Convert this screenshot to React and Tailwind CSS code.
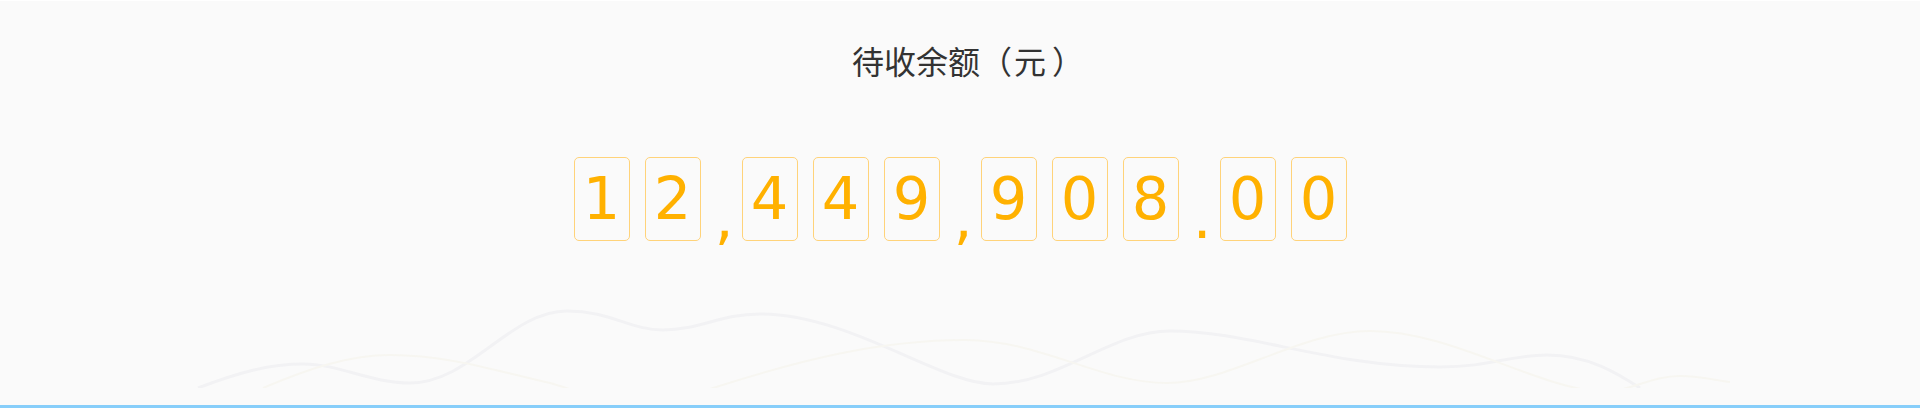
const digits = ['1', '2', ',', '4', '4', '9', ',', '9', '0', '8', '.', '0', '0'];

function Waves() {
  return (
    <svg className="block w-full h-[98px]" viewBox="0 290 1920 98" preserveAspectRatio="none" fill="none">
      <path
        d="M198,388 C240,372 270,364 303,364 C340,364 370,383 410,383 C470,383 510,311 567,311 C610,311 630,330 663,330 C700,330 720,314 760,314 C850,314 940,384 993,384 C1060,384 1110,331 1170,331 C1250,331 1330,367 1440,367 C1490,367 1510,355 1547,355 C1590,355 1620,375 1640,388"
        stroke="#f2f2f4"
        strokeWidth="3"
      />
      <path
        d="M263,388 C310,368 350,355 390,355 C450,355 500,372 550,383 C575,390 590,398 620,400 C660,402 690,396 713,388 C800,360 880,340 965,340 C1040,340 1100,383 1167,383 C1230,383 1300,331 1370,331 C1450,331 1530,385 1600,392 C1630,392 1650,376 1680,376 C1700,376 1715,380 1730,382"
        stroke="#f7f6f1"
        strokeWidth="2"
      />
    </svg>
  );
}

export default function App() {
  return (
    <div className="w-full h-[408px] bg-[#fafafa] border-t border-white flex flex-col overflow-hidden">
      <h1
        className="pt-[37px] pl-[16px] h-[83px] text-center text-[32px] leading-[44px] text-[#333333] font-normal"
        style={{ fontFamily: '"Noto Sans CJK SC", "Noto Sans", sans-serif' }}
      >
        待收余额
        <span className="mr-[2px]">（</span>
        元
        <span className="ml-[6px]">）</span>
      </h1>

      <div
        className="mt-[73px] flex justify-center gap-[15px]"
        style={{ fontFamily: '"DejaVu Sans", sans-serif' }}
      >
        {digits.map((d, i) =>
          /\d/.test(d) ? (
            <div
              key={i}
              className="w-[56px] h-[84px] border border-[#ffd37a] rounded-[5px] flex items-center justify-center text-[59px] leading-[84px] text-[#ffb100]"
            >
              {d}
            </div>
          ) : (
            <div key={i} className="w-[11px] h-[84px] flex items-end justify-center">
              <span className="text-[59px] leading-none text-[#ffb100] translate-x-[3px] translate-y-[6px]">{d}</span>
            </div>
          )
        )}
      </div>

      <div className="mt-[49px]">
        <Waves />
      </div>

      <div className="mt-auto h-[3px] bg-[#87cefa]" />
    </div>
  );
}
